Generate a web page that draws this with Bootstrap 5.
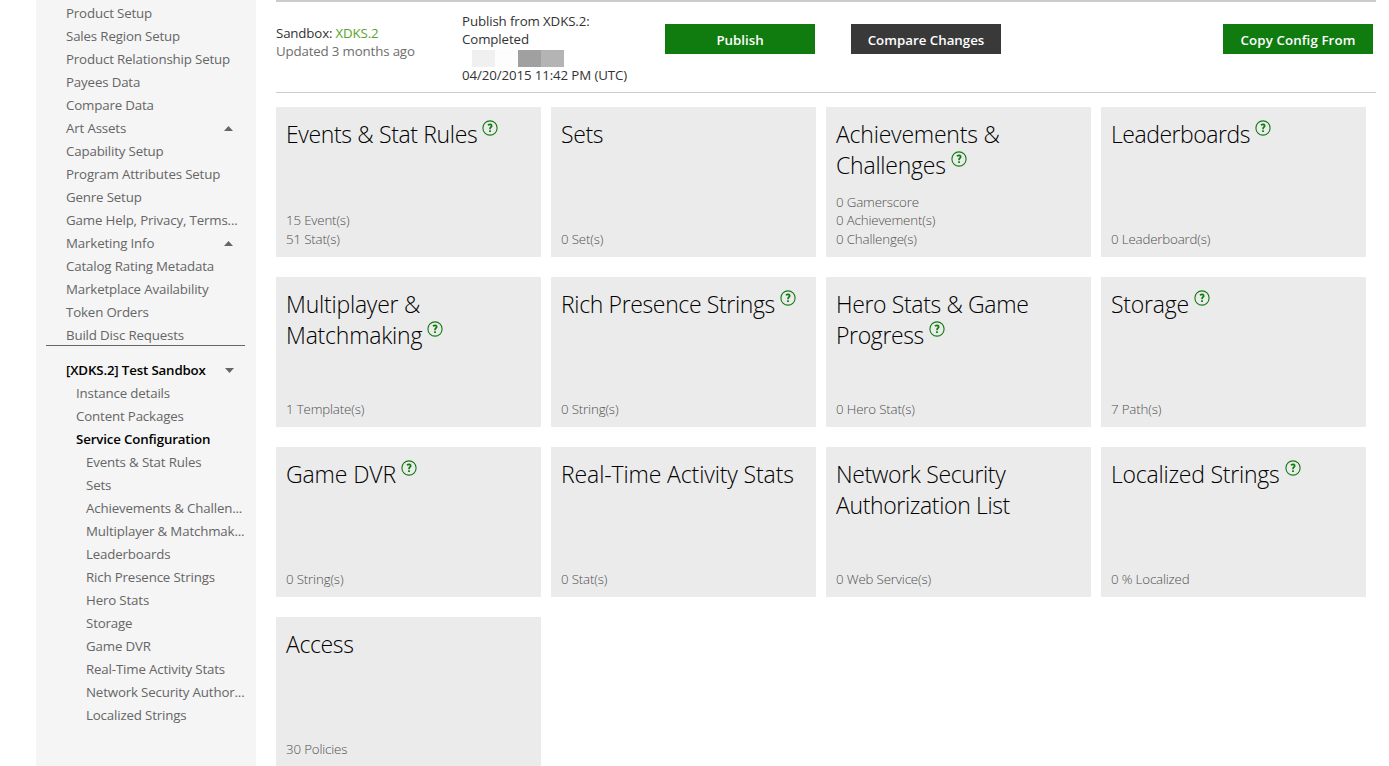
<!DOCTYPE html>
<html lang="en">
<head>
<meta charset="utf-8">
<meta name="viewport" content="width=device-width, initial-scale=1">
<title>Service Configuration</title>
<link href="https://cdn.jsdelivr.net/npm/bootstrap@5.3.0/dist/css/bootstrap.min.css" rel="stylesheet">
<style>
body{font-family:"Open Sans","Noto Sans",sans-serif;font-size:13.3px;line-height:18px;letter-spacing:-.16px;color:#333;height:766px;overflow:hidden;background:#fff}
.side{width:220px;height:766px;margin-left:36px;background:#f5f5f5;padding-left:10px}
.side .nav{width:210px}
.side .nav-link{height:23px;line-height:23px;padding:0 0 0 20px;color:#666;white-space:nowrap;display:flex;align-items:center}
.side .lvl2{padding-left:30px}
.side .lvl3{padding-left:40px}
.side .nav-link.active{color:#000;font-weight:600}
.side .product{width:199px;height:346px;padding-top:2px;border-bottom:1px solid #666}
.side .sandbox{margin-top:13px}
.caret-up,.caret-down{width:9px;height:5px;background:#666;margin-left:auto;margin-right:12px}
.caret-up{clip-path:polygon(50% 0,100% 100%,0 100%)}
.caret-down{clip-path:polygon(0 0,100% 0,50% 100%);margin-right:22px}
.content{width:1100px;margin-left:20px}
.topbar{height:93px;border-top:2px solid #ccc;border-bottom:1px solid #ccc}
.col-box{width:186px;padding-top:22px}
.col-pub{width:203px;padding-top:10px;letter-spacing:-.12px}
.green{color:#54a52b}
.updated{color:#6e6e6e}
.redacted{height:18px;padding:2px 0 0 10px}
.redacted i{width:23px;height:17px}
.r1{background:#f0f0f0}.r2{background:#fdfdfd}.r3{background:#a0a0a0}.r4{background:#b4b4b4}
.act{width:150px;height:30px;margin-top:22px;padding:2px 0 0;border:0;border-radius:0;font-size:13.3px;font-weight:600;line-height:28px;letter-spacing:0;color:#fff;background:#107c10}
.act-dark{background:#393939;margin-left:36px}
.act-copy{margin-right:3px;letter-spacing:.1px}
.tiles{display:grid;grid-template-columns:repeat(4,265px);grid-auto-rows:150px;gap:20px 10px;margin-top:14px}
.tile{background:#ebebeb;padding:12px 10px 9px}
.tile h2{margin:0;font-size:23px;font-weight:300;line-height:31px;letter-spacing:-.36px;color:#000;white-space:nowrap}
.tile h2.tight{letter-spacing:-.47px}
.tile h2.wide{letter-spacing:-.22px}
.tile h2.wider{letter-spacing:-.12px}
.tile p{margin:0;font-weight:300;line-height:18.5px;color:#505050}
.help{width:16px;height:16px;margin-left:5px;vertical-align:7.5px}
</style>
</head>
<body class="d-flex">
<svg class="d-none"><symbol id="q" viewBox="0 0 16 16"><circle cx="8" cy="8" r="7.1" fill="none" stroke="#107c10" stroke-width="1.1"/><path d="M5.9 5.1Q8.6 3.6 9.6 5.2Q10 6.4 8.8 7.2Q8 7.8 8 9.2" fill="none" stroke="#107c10" stroke-width="1.7"/><rect x="7.1" y="10.3" width="1.8" height="1.7" fill="#107c10"/></symbol></svg>
<aside class="side flex-shrink-0">
  <nav class="nav flex-column flex-nowrap product">
    <a class="nav-link">Product Setup</a>
    <a class="nav-link">Sales Region Setup</a>
    <a class="nav-link">Product Relationship Setup</a>
    <a class="nav-link">Payees Data</a>
    <a class="nav-link">Compare Data</a>
    <a class="nav-link">Art Assets<span class="caret-up"></span></a>
    <a class="nav-link">Capability Setup</a>
    <a class="nav-link">Program Attributes Setup</a>
    <a class="nav-link">Genre Setup</a>
    <a class="nav-link">Game Help, Privacy, Terms...</a>
    <a class="nav-link">Marketing Info<span class="caret-up"></span></a>
    <a class="nav-link">Catalog Rating Metadata</a>
    <a class="nav-link">Marketplace Availability</a>
    <a class="nav-link">Token Orders</a>
    <a class="nav-link">Build Disc Requests</a>
  </nav>
  <nav class="nav flex-column flex-nowrap sandbox">
    <a class="nav-link active">[XDKS.2] Test Sandbox<span class="caret-down"></span></a>
    <a class="nav-link lvl2">Instance details</a>
    <a class="nav-link lvl2">Content Packages</a>
    <a class="nav-link lvl2 active">Service Configuration</a>
    <a class="nav-link lvl3">Events &amp; Stat Rules</a>
    <a class="nav-link lvl3">Sets</a>
    <a class="nav-link lvl3">Achievements &amp; Challen...</a>
    <a class="nav-link lvl3">Multiplayer &amp; Matchmak...</a>
    <a class="nav-link lvl3">Leaderboards</a>
    <a class="nav-link lvl3">Rich Presence Strings</a>
    <a class="nav-link lvl3">Hero Stats</a>
    <a class="nav-link lvl3">Storage</a>
    <a class="nav-link lvl3">Game DVR</a>
    <a class="nav-link lvl3">Real-Time Activity Stats</a>
    <a class="nav-link lvl3">Network Security Author...</a>
    <a class="nav-link lvl3">Localized Strings</a>
  </nav>
</aside>
<main class="content flex-shrink-0">
  <header class="topbar d-flex align-items-start">
    <div class="col-box flex-shrink-0">
      <div>Sandbox: <span class="green">XDKS.2</span></div>
      <div class="updated">Updated 3 months ago</div>
    </div>
    <div class="col-pub flex-shrink-0">
      <div>Publish from XDKS.2:</div>
      <div>Completed</div>
      <div class="redacted d-flex"><i class="r1"></i><i class="r2"></i><i class="r3"></i><i class="r4"></i></div>
      <div>04/20/2015 11:42 PM (UTC)</div>
    </div>
    <button class="btn act">Publish</button>
    <button class="btn act act-dark">Compare Changes</button>
    <button class="btn act act-copy ms-auto">Copy Config From</button>
  </header>
  <section class="tiles">
    <div class="tile d-flex flex-column justify-content-between"><h2>Events &amp; Stat Rules<svg class="help"><use href="#q"/></svg></h2><p>15 Event(s)<br>51 Stat(s)</p></div>
    <div class="tile d-flex flex-column justify-content-between"><h2>Sets</h2><p>0 Set(s)</p></div>
    <div class="tile d-flex flex-column justify-content-between"><h2 class="wide">Achievements &amp;<br>Challenges<svg class="help"><use href="#q"/></svg></h2><p>0 Gamerscore<br>0 Achievement(s)<br>0 Challenge(s)</p></div>
    <div class="tile d-flex flex-column justify-content-between"><h2 class="tight">Leaderboards<svg class="help"><use href="#q"/></svg></h2><p>0 Leaderboard(s)</p></div>
    <div class="tile d-flex flex-column justify-content-between"><h2 class="wide">Multiplayer &amp;<br>Matchmaking<svg class="help"><use href="#q"/></svg></h2><p>1 Template(s)</p></div>
    <div class="tile d-flex flex-column justify-content-between"><h2>Rich Presence Strings<svg class="help"><use href="#q"/></svg></h2><p>0 String(s)</p></div>
    <div class="tile d-flex flex-column justify-content-between"><h2>Hero Stats &amp; Game<br>Progress<svg class="help"><use href="#q"/></svg></h2><p>0 Hero Stat(s)</p></div>
    <div class="tile d-flex flex-column justify-content-between"><h2 class="wide">Storage<svg class="help"><use href="#q"/></svg></h2><p>7 Path(s)</p></div>
    <div class="tile d-flex flex-column justify-content-between"><h2 class="wider">Game DVR<svg class="help"><use href="#q"/></svg></h2><p>0 String(s)</p></div>
    <div class="tile d-flex flex-column justify-content-between"><h2 class="wider">Real-Time Activity Stats</h2><p>0 Stat(s)</p></div>
    <div class="tile d-flex flex-column justify-content-between"><h2>Network Security<br>Authorization List</h2><p>0 Web Service(s)</p></div>
    <div class="tile d-flex flex-column justify-content-between"><h2 class="wide">Localized Strings<svg class="help"><use href="#q"/></svg></h2><p>0 % Localized</p></div>
    <div class="tile d-flex flex-column justify-content-between"><h2>Access</h2><p>30 Policies</p></div>
  </section>
</main>
<script src="https://cdn.jsdelivr.net/npm/bootstrap@5.3.0/dist/js/bootstrap.bundle.min.js"></script>
</body>
</html>
